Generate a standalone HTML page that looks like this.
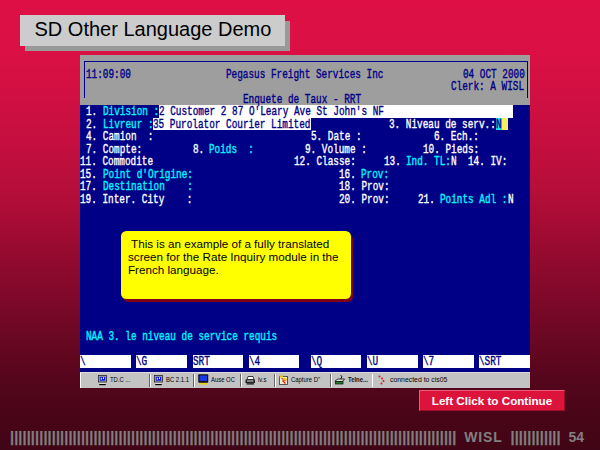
<!DOCTYPE html>
<html lang="en"><head><meta charset="utf-8"><title>SD Other Language Demo</title>
<style>
html,body{margin:0;padding:0}
body{width:600px;height:450px;overflow:hidden;position:relative;font-family:"Liberation Sans",sans-serif;
background:linear-gradient(to bottom,#de1046 0px,#da1044 55px,#d00f42 100px,#c20e3e 150px,#b60e3a 190px,#970a30 250px,#730826 320px,#54061c 380px,#480518 420px,#400516 450px)}
.abs{position:absolute}
.title-sh{left:25px;top:21px;width:265px;height:29.7px;background:#999}
.title{left:20px;top:15px;width:265px;height:30.7px;background:#ccc;color:#000;font-size:20px;line-height:29.8px;text-indent:14.5px;white-space:nowrap}
.term{left:80px;top:55px;width:450px;height:332.5px;background:#000086;overflow:hidden}
.hdr{left:0;top:0;width:450px;height:49.75px;background:#9e9e9e}
.t{position:absolute;white-space:pre;font-family:"Liberation Mono",monospace;font-weight:normal;-webkit-text-stroke:0.4px;font-size:13.5px;line-height:12.5px;height:12.5px;margin-top:1px;transform-origin:0 0;transform:scaleX(0.69433)}
.fld{position:absolute;background:#fff;height:12.5px}
.task{left:0;top:317px;width:450px;height:15.5px;background:#c3c3c3}
.tb{position:absolute;top:0;height:15.5px;font-size:7.4px;line-height:15.5px;color:#000;white-space:nowrap;transform-origin:0 0;transform:scaleX(0.8);top:0.4px}
.sep{position:absolute;top:1.5px;width:1px;height:13px;background:#666;border-right:1px solid #fff}
.call-sh{left:123px;top:234px;width:230px;height:68px;border-radius:5.5px;background:#7d0014}
.call{left:121px;top:231px;width:230px;height:68px;border-radius:5.5px;background:#ffff00;color:#000;font-size:11.67px;line-height:13.3px;white-space:pre}
.btn{left:419px;top:390px;width:146px;height:21px;box-sizing:border-box;background:#dc143c;border-top:1.5px solid #ee5a78;border-left:1.5px solid #ee5a78;border-bottom:1.5px solid #9a0e2a;border-right:1.5px solid #9a0e2a;color:#fff;font-weight:bold;font-size:11.67px;line-height:19.5px;text-align:center;white-space:nowrap}
.foot{color:#808080;font-weight:bold;white-space:nowrap;line-height:16px;top:429px}
</style></head><body>
<div class="abs title-sh"></div>
<div class="abs title">SD Other Language Demo</div>
<div class="abs term">
<div class="abs hdr"></div>
<div class="abs" style="left:3.5px;top:5.8px;width:444px;height:37.5px;box-sizing:border-box;border:1px solid #000086;border-bottom:none"></div>

<div class="fld" style="left:78.750px;top:49.75px;width:354.375px;height:13.00px;background:#fff"></div>
<div class="fld" style="left:73.125px;top:62.75px;width:157.500px;height:12.40px;background:#fff"></div>
<div class="fld" style="left:416.250px;top:62.75px;width:5.625px;height:12.40px;background:#1ee0f0"></div>
<div class="fld" style="left:421.875px;top:62.75px;width:5.625px;height:12.40px;background:#f4f060"></div>
<div class="fld" style="left:0.000px;top:300.00px;width:50.625px;height:12.50px;background:#fff"></div>
<div class="fld" style="left:56.250px;top:300.00px;width:50.625px;height:12.50px;background:#fff"></div>
<div class="fld" style="left:112.500px;top:300.00px;width:50.625px;height:12.50px;background:#fff"></div>
<div class="fld" style="left:168.750px;top:300.00px;width:50.625px;height:12.50px;background:#fff"></div>
<div class="fld" style="left:230.625px;top:300.00px;width:50.625px;height:12.50px;background:#fff"></div>
<div class="fld" style="left:286.875px;top:300.00px;width:50.625px;height:12.50px;background:#fff"></div>
<div class="fld" style="left:343.125px;top:300.00px;width:50.625px;height:12.50px;background:#fff"></div>
<div class="fld" style="left:399.375px;top:300.00px;width:50.625px;height:12.50px;background:#fff"></div>
<div class="t" style="left:5.625px;top:12.50px;color:#000086">11:09:00</div>
<div class="t" style="left:146.250px;top:12.50px;color:#000086">Pegasus Freight Services Inc</div>
<div class="t" style="left:382.500px;top:12.50px;color:#000086">04 OCT 2000</div>
<div class="t" style="left:371.250px;top:25.00px;color:#000086">Clerk: A WISL</div>
<div class="t" style="left:163.125px;top:37.50px;color:#000086">Enquete de Taux - RRT</div>
<div class="t" style="left:5.625px;top:50.00px;color:#fff">1.</div>
<div class="t" style="left:22.500px;top:50.00px;color:#00f6ff">Division :</div>
<div class="t" style="left:78.750px;top:50.00px;color:#000086">2 Customer 2 87 O'Leary Ave St John's NF</div>
<div class="t" style="left:5.625px;top:62.50px;color:#fff">2.</div>
<div class="t" style="left:22.500px;top:62.50px;color:#00f6ff">Livreur :</div>
<div class="t" style="left:73.125px;top:62.50px;color:#000086">35 Purolator Courier Limited</div>
<div class="t" style="left:309.375px;top:62.50px;color:#fff">3. Niveau de serv.:</div>
<div class="t" style="left:416.250px;top:62.50px;color:#000086">N</div>
<div class="t" style="left:5.625px;top:75.00px;color:#fff">4. Camion  :</div>
<div class="t" style="left:230.625px;top:75.00px;color:#fff">5. Date :</div>
<div class="t" style="left:354.375px;top:75.00px;color:#fff">6. Ech.:</div>
<div class="t" style="left:5.625px;top:87.50px;color:#fff">7. Compte:</div>
<div class="t" style="left:112.500px;top:87.50px;color:#fff">8.</div>
<div class="t" style="left:129.375px;top:87.50px;color:#00f6ff">Poids  :</div>
<div class="t" style="left:225.000px;top:87.50px;color:#fff">9. Volume :</div>
<div class="t" style="left:343.125px;top:87.50px;color:#fff">10. Pieds:</div>
<div class="t" style="left:0.000px;top:100.00px;color:#fff">11. Commodite</div>
<div class="t" style="left:213.750px;top:100.00px;color:#fff">12. Classe:</div>
<div class="t" style="left:303.750px;top:100.00px;color:#fff">13.</div>
<div class="t" style="left:326.250px;top:100.00px;color:#00f6ff">Ind. TL:</div>
<div class="t" style="left:371.250px;top:100.00px;color:#fff">N</div>
<div class="t" style="left:388.125px;top:100.00px;color:#fff">14. IV:</div>
<div class="t" style="left:0.000px;top:112.50px;color:#fff">15.</div>
<div class="t" style="left:22.500px;top:112.50px;color:#00f6ff">Point d'Origine:</div>
<div class="t" style="left:258.750px;top:112.50px;color:#fff">16.</div>
<div class="t" style="left:281.250px;top:112.50px;color:#00f6ff">Prov:</div>
<div class="t" style="left:0.000px;top:125.00px;color:#fff">17.</div>
<div class="t" style="left:22.500px;top:125.00px;color:#00f6ff">Destination    :</div>
<div class="t" style="left:258.750px;top:125.00px;color:#fff">18. Prov:</div>
<div class="t" style="left:0.000px;top:137.50px;color:#fff">19. Inter. City    :</div>
<div class="t" style="left:258.750px;top:137.50px;color:#fff">20. Prov:</div>
<div class="t" style="left:337.500px;top:137.50px;color:#fff">21.</div>
<div class="t" style="left:360.000px;top:137.50px;color:#00f6ff">Points Adl :</div>
<div class="t" style="left:427.500px;top:137.50px;color:#fff">N</div>
<div class="t" style="left:5.625px;top:275.00px;color:#00f6ff">NAA 3. le niveau de service requis</div>
<div class="t" style="left:0.000px;top:300.00px;color:#000086">\</div>
<div class="t" style="left:56.250px;top:300.00px;color:#000086">\G</div>
<div class="t" style="left:112.500px;top:300.00px;color:#000086">SRT</div>
<div class="t" style="left:168.750px;top:300.00px;color:#000086">\4</div>
<div class="t" style="left:230.625px;top:300.00px;color:#000086">\Q</div>
<div class="t" style="left:286.875px;top:300.00px;color:#000086">\U</div>
<div class="t" style="left:343.125px;top:300.00px;color:#000086">\7</div>
<div class="t" style="left:399.375px;top:300.00px;color:#000086">\SRT</div>
<div class="abs task">
<div style="position:absolute;left:0;top:0;width:1px;height:15.5px;background:#fff"></div>
<div style="position:absolute;left:0;top:0;width:450px;height:0.5px;background:#dcdcdc"></div>
<svg style="position:absolute;left:18.00px;top:3.00px" width="9.0" height="10.5" viewBox="0 0 18 21"><rect x="1" y="1" width="16" height="13" fill="#b0b0b0" stroke="#222" stroke-width="1.6"/><rect x="3.5" y="3.5" width="11" height="8" fill="#0818f0"/><rect x="5.5" y="5.5" width="2" height="4" fill="#fff"/><rect x="10" y="4.5" width="2" height="3.5" fill="#fff"/><rect x="5" y="14.5" width="8" height="2" fill="#888"/><rect x="3" y="16" width="12" height="2" fill="#ddd"/><rect x="2.5" y="18" width="13" height="2.4" fill="#000"/></svg>
<div class="tb" style="left:29.5px">TD.C ...</div>
<div class="sep" style="left:68.5px"></div>
<svg style="position:absolute;left:73.50px;top:3.00px" width="9.0" height="10.5" viewBox="0 0 18 21"><rect x="1" y="1" width="16" height="13" fill="#b0b0b0" stroke="#222" stroke-width="1.6"/><rect x="3.5" y="3.5" width="11" height="8" fill="#0818f0"/><rect x="5.5" y="5.5" width="2" height="4" fill="#fff"/><rect x="10" y="4.5" width="2" height="3.5" fill="#fff"/><rect x="5" y="14.5" width="8" height="2" fill="#888"/><rect x="3" y="16" width="12" height="2" fill="#ddd"/><rect x="2.5" y="18" width="13" height="2.4" fill="#000"/></svg>
<div class="tb" style="left:85.5px">BC 2.1.1</div>
<div class="sep" style="left:113px"></div>
<svg style="position:absolute;left:118px;top:2px" width="10.5" height="11.5" viewBox="0 0 21 23"><rect x="0.5" y="0.5" width="20" height="17" rx="2" fill="#111"/><rect x="3" y="3" width="15" height="11" fill="#1838e8"/><rect x="3" y="18" width="15" height="3" fill="#e8d800"/></svg>
<div class="tb" style="left:131px">Ause OC</div>
<div class="sep" style="left:159.5px"></div>
<svg style="position:absolute;left:164.5px;top:3.5px" width="10.5" height="9" viewBox="0 0 21 18"><path d="M6 1h10l2 6H4z" fill="#fff" stroke="#111" stroke-width="1.6"/><rect x="1" y="7" width="19" height="7" fill="#222"/><rect x="3" y="14.5" width="15" height="2.5" fill="#111"/><rect x="4" y="9" width="13" height="2" fill="#ddd"/></svg>
<div class="tb" style="left:177.5px">lv.s</div>
<div class="sep" style="left:193.5px"></div>
<svg style="position:absolute;left:199px;top:3px" width="9" height="10" viewBox="0 0 18 20"><rect x="1" y="3" width="16" height="16" fill="#f4f0d0" stroke="#333" stroke-width="1.6"/><rect x="1" y="1" width="7" height="4" fill="#e8c000"/><path d="M5 7l8 3-5 2 5 5" stroke="#e01010" stroke-width="2.4" fill="none"/><rect x="9" y="6" width="6" height="5" fill="#f0d000"/></svg>
<div class="tb" style="left:211px">Capture D''</div>
<div class="sep" style="left:250px"></div>
<svg style="position:absolute;left:254.5px;top:3px" width="10" height="10" viewBox="0 0 20 20"><path d="M11 1l3 2-3 6" stroke="#111" stroke-width="2" fill="none"/><path d="M1 11l5-3h13l-4 5H1z" fill="#ddd" stroke="#111" stroke-width="1.6"/><rect x="1" y="13" width="15" height="5" fill="#208030" stroke="#111" stroke-width="1.4"/></svg>
<div class="tb" style="left:268px;font-weight:bold;color:#111">Telne...</div>
<div class="sep" style="left:291.5px;background:#fff;border-right:none"></div>
<svg style="position:absolute;left:297.5px;top:3px" width="7" height="10" viewBox="0 0 14 20"><circle cx="3" cy="3" r="2" fill="#e01818"/><circle cx="8" cy="7" r="2" fill="#e01818"/><circle cx="11" cy="12" r="2" fill="#e01818"/><circle cx="7" cy="17" r="2" fill="#e01818"/></svg>
<div class="tb" style="left:310px;transform:scaleX(0.93)">connected to cis05</div>
</div>
</div>
<div class="abs call-sh"></div>
<div class="abs call"><div style="position:absolute;left:7px;top:5.6px"> This is an example of a fully translated
screen for the Rate Inquiry module in the
French language.</div></div>
<div class="abs btn">Left Click to Continue</div>
<div class="abs foot" style="left:10px;font-size:14.5px;letter-spacing:0.115px;-webkit-text-stroke:0.25px #808080">|||||||||||||||||||||||||||||||||||||||||||||||||||||||||||||||||||||||||||||||||||||||||||||||||||||||||||</div>
<div class="abs foot" style="left:464.3px;font-size:14px;letter-spacing:0.85px">WISL</div>
<div class="abs foot" style="left:510.5px;font-size:14.5px;letter-spacing:0.13px;-webkit-text-stroke:0.25px #808080">||||||||||||</div>
<div class="abs foot" style="left:568.5px;font-size:14px">54</div>
</body></html>
